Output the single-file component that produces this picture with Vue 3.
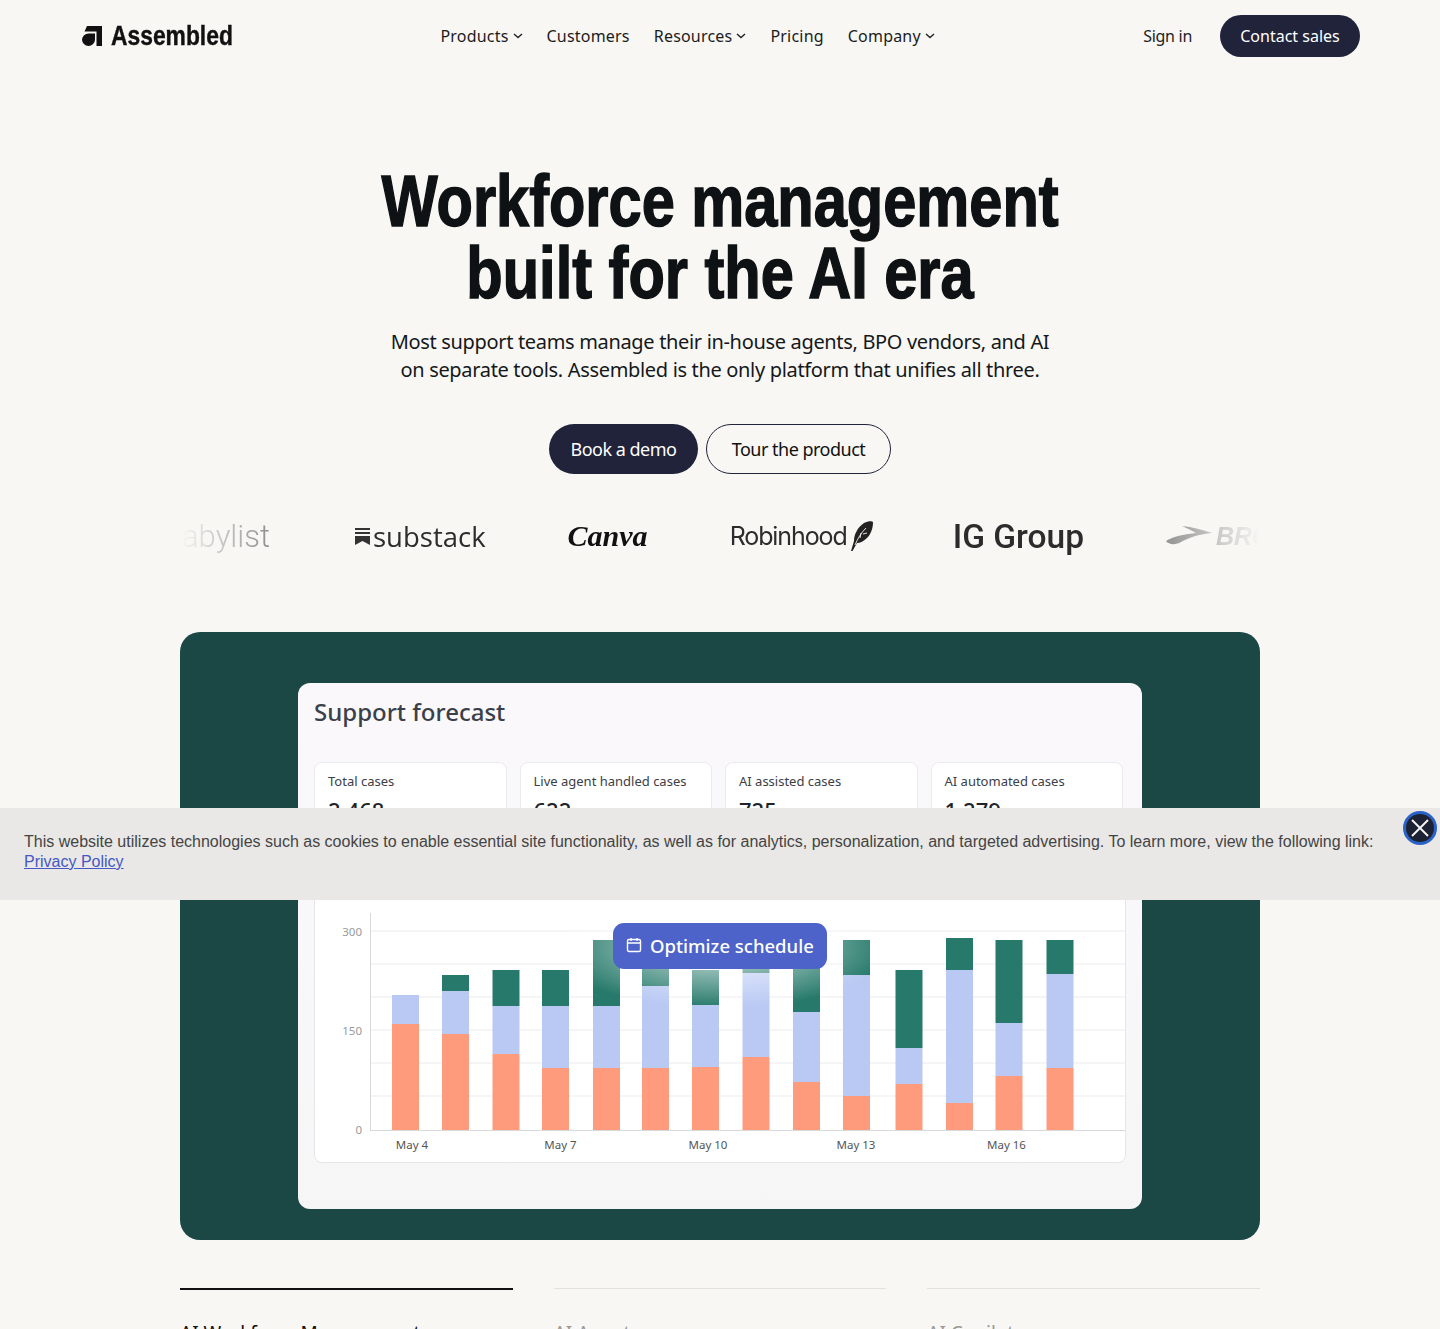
<script setup>
const navItems = [
  { label: 'Products', caret: true },
  { label: 'Customers', caret: false },
  { label: 'Resources', caret: true },
  { label: 'Pricing', caret: false },
  { label: 'Company', caret: true }
]

const stats = [
  { label: 'Total cases', value: '2,468' },
  { label: 'Live agent handled cases', value: '622' },
  { label: 'AI assisted cases', value: '725' },
  { label: 'AI automated cases', value: '1,279' }
]

// x, green top, blue top, orange top (page px, baseline is 1130)
const bars = [
  [392, 995, 995, 1024],
  [442, 975, 991, 1034],
  [492.5, 970, 1006, 1054],
  [542, 970, 1006, 1068],
  [593, 940, 1006, 1068],
  [642, 940, 986, 1068],
  [692, 970, 1005, 1067],
  [742.5, 940, 973, 1057],
  [793, 930, 1012, 1082],
  [843, 940, 975, 1096],
  [895.5, 970, 1048, 1084],
  [946, 938, 970, 1103],
  [995.5, 940, 1023, 1076],
  [1046.5, 940, 974, 1068]
]

const gridLines = [931, 964, 997, 1030, 1063, 1096]
const yLabels = [
  { y: 936, text: '300' },
  { y: 1035, text: '150' },
  { y: 1134, text: '0' }
]
const xLabels = [
  { x: 412, text: 'May 4' },
  { x: 560.5, text: 'May 7' },
  { x: 708, text: 'May 10' },
  { x: 856, text: 'May 13' },
  { x: 1006.5, text: 'May 16' }
]

const tabs = ['AI Workforce Management', 'AI Agents', 'AI Copilot']
</script>

<template>
  <div class="page">
    <header class="topbar">
      <a class="brand">
        <svg class="brand-mark" viewBox="0 0 20 20" width="20" height="20">
          <path d="M5 0H20V20H14.5V5.5H2.5Z" fill="#111" />
          <path d="M0 13.5a6.5 6.5 0 0 0 13 0V7.5H6.5A6.5 6.5 0 0 0 0 13.5Z" fill="#111" />
        </svg>
        <span class="brand-name">Assembled</span>
      </a>
      <nav class="nav">
        <a v-for="item in navItems" :key="item.label" class="nav-link">
          {{ item.label }}
          <svg v-if="item.caret" viewBox="0 0 10 6" width="10" height="6">
            <path d="M1 1l4 3.6L9 1" fill="none" stroke="#222" stroke-width="1.4" />
          </svg>
        </a>
      </nav>
      <div class="topbar-right">
        <a class="signin">Sign in</a>
        <a class="contact">Contact sales</a>
      </div>
    </header>

    <section class="hero">
      <h1>Workforce management<br />built for the AI era</h1>
      <p>Most support teams manage their in-house agents, BPO vendors, and AI<br />on separate tools. Assembled is the only platform that unifies all three.</p>
      <div class="cta">
        <a class="btn btn-dark">Book a demo</a>
        <a class="btn btn-line">Tour the product</a>
      </div>
    </section>

    <div class="logos">
      <div class="logo-track">
        <span class="logo logo-babylist">Babylist</span>
        <span class="logo logo-substack">
          <svg viewBox="0 0 15 17" width="15" height="17">
            <path d="M0 0h15v2H0zM0 4h15v2H0zM0 8h15v9l-7.5-4L0 17z" fill="#333" />
          </svg>
          substack
        </span>
        <span class="logo logo-canva">Canva</span>
        <span class="logo logo-robinhood">
          Robinhood
          <svg viewBox="0 0 22 30" width="22" height="30">
            <path d="M0 30L3 20C3 13 7 6 13 2 17 0 21 0 22 1 22 7 20 13 16 17 13 20 9 22 6 22L1.500 30Z" fill="#222" />
            <path d="M4 24C7 17 10 12 15 7M9 17l1 -5M12 13l4 -1" fill="none" stroke="#f8f7f4" stroke-width="0.9" />
          </svg>
        </span>
        <span class="logo logo-ig">IG Group</span>
        <span class="logo logo-brooks">
          <svg viewBox="0 0 46 20" width="46" height="20">
            <path d="M0 15C8 10 20 8 30 7 26 5 21 2 16 0c10 1 21 4 30 7-12 1-22 4-31 9-5 3-12 3-15-1Z" fill="#8d8d8b" />
          </svg>
          <b>BROOKS</b>
        </span>
      </div>
    </div>

    <section class="showcase">
      <div class="panel">
        <h2>Support forecast</h2>
        <div class="stats">
          <div v-for="stat in stats" :key="stat.label" class="stat">
            <div class="stat-label">{{ stat.label }}</div>
            <div class="stat-value">{{ stat.value }}</div>
          </div>
        </div>
        <div class="chart-card">
          <svg class="chart" viewBox="315 869 810 293" width="810" height="293">
            <defs>
              <radialGradient id="glow">
                <stop offset="0" stop-color="#fff" stop-opacity="0.8" />
                <stop offset="1" stop-color="#fff" stop-opacity="0" />
              </radialGradient>
            </defs>
            <line v-for="y in gridLines" :key="y" x1="370" x2="1126" :y1="y" :y2="y" stroke="#ebebeb" />
            <line x1="370.5" x2="370.5" y1="913" y2="1130" stroke="#d9d9d9" />
            <line x1="370" x2="1126" y1="1130.5" y2="1130.5" stroke="#d9d9d9" />
            <g v-for="bar in bars" :key="bar[0]">
              <rect :x="bar[0]" :y="bar[1]" width="27" :height="bar[2] - bar[1]" fill="#277a6b" />
              <rect :x="bar[0]" :y="bar[2]" width="27" :height="bar[3] - bar[2]" fill="#b9c9f4" />
              <rect :x="bar[0]" :y="bar[3]" width="27" :height="1130 - bar[3]" fill="#fd9b7c" />
            </g>
            <ellipse cx="720" cy="946" rx="170" ry="62" fill="url(#glow)" />
            <text v-for="l in yLabels" :key="l.text" x="362" :y="l.y" text-anchor="end" class="tick-y">{{ l.text }}</text>
            <text v-for="l in xLabels" :key="l.text" :x="l.x" y="1149" text-anchor="middle" class="tick-x">{{ l.text }}</text>
          </svg>
          <div class="optimize">
            <svg viewBox="0 0 16 16" width="16" height="16">
              <rect x="1.5" y="2.500" width="13" height="12" rx="1.5" fill="none" stroke="#fff" stroke-width="1.4" />
              <path d="M1.5 6h13M5 1v3M11 1v3" stroke="#fff" stroke-width="1.4" />
            </svg>
            Optimize schedule
          </div>
        </div>
      </div>
    </section>

    <div class="tabs">
      <div v-for="(tab, i) in tabs" :key="tab" class="tab" :class="{ active: i === 0 }">{{ tab }}</div>
    </div>

    <div class="cookie">
      <p>This website utilizes technologies such as cookies to enable essential site functionality, as well as for analytics, personalization, and targeted advertising. To learn more, view the following link: <a>Privacy Policy</a></p>
      <button class="cookie-close" aria-label="Close">
        <svg viewBox="0 0 20 20" width="20" height="20">
          <path d="M2 2l16 16M18 2L2 18" stroke="#f4f4f4" stroke-width="2" />
        </svg>
      </button>
    </div>
  </div>
</template>

<style>
body {
  background: #f8f7f4;
}
</style>

<style scoped>
* {
  box-sizing: border-box;
}

.page {
  position: relative;
  height: 1329px;
  overflow: hidden;
  background: #f8f7f4;
  color: #111;
  font-family: 'Noto Sans', sans-serif;
}

.topbar {
  display: flex;
  align-items: center;
  justify-content: space-between;
  height: 72px;
  padding: 0 80px 0 82px;
}

.brand {
  display: flex;
  align-items: center;
  gap: 9px;
}

.brand-name {
  display: block;
  width: 121px;
  font-family: 'Liberation Sans', sans-serif;
  font-size: 27px;
  font-weight: 700;
  color: #111;
  white-space: nowrap;
  transform: scaleX(0.846);
  transform-origin: left center;
  -webkit-text-stroke: 0.4px #111;
}

.nav {
  display: flex;
  gap: 24px;
}

.nav-link {
  display: flex;
  align-items: center;
  gap: 4px;
  font-size: 16px;
  letter-spacing: 0.2px;
  color: #1c1c1c;
}

.topbar-right {
  display: flex;
  align-items: center;
  gap: 28px;
}

.signin {
  font-size: 16px;
  letter-spacing: -0.3px;
  color: #222;
}

.contact {
  display: flex;
  align-items: center;
  justify-content: center;
  width: 140px;
  height: 42px;
  border-radius: 21px;
  background: #20233a;
  color: #fff;
  font-size: 16px;
}

.hero {
  text-align: center;
  padding-top: 93px;
}

.hero h1 {
  margin: 0;
  font-family: 'Liberation Sans', sans-serif;
  font-size: 72px;
  line-height: 72px;
  font-weight: 700;
  color: #0e1214;
  transform: scaleX(0.827);
  -webkit-text-stroke: 1.5px #0e1214;
}

.hero p {
  margin: 19px 0 0;
  font-size: 20px;
  line-height: 28px;
  letter-spacing: -0.33px;
  color: #15181a;
}

.cta {
  display: flex;
  justify-content: center;
  gap: 8px;
  margin-top: 40px;
}

.btn {
  display: flex;
  align-items: center;
  justify-content: center;
  height: 50px;
  padding-bottom: 1px;
  border-radius: 25px;
  font-size: 18px;
  letter-spacing: -0.5px;
}

.btn-dark {
  width: 149px;
  background: #20233a;
  color: #fff;
}

.btn-line {
  width: 185px;
  border: 1px solid #20233a;
  color: #111;
}

.logos {
  width: 1080px;
  height: 60px;
  margin: 32px auto 0;
  overflow: hidden;
  -webkit-mask-image: linear-gradient(to right, transparent 0, #000 110px, #000 980px, transparent 1080px);
  mask-image: linear-gradient(to right, transparent 0, #000 110px, #000 980px, transparent 1080px);
}

.logo-track {
  display: flex;
  align-items: center;
  gap: 82px;
  height: 60px;
  margin-left: -30px;
  white-space: nowrap;
}

.logo {
  display: flex;
  align-items: center;
  flex: none;
  color: #2c2c2c;
}

.logo-babylist {
  width: 123px;
  padding-right: 3px;
  justify-content: flex-end;
  font-family: 'Roboto', sans-serif;
  font-size: 31px;
  font-weight: 300;
  color: #777;
}

.logo-substack {
  gap: 3px;
  font-family: 'Open Sans', sans-serif;
  font-size: 27.5px;
}

.logo-canva {
  font-family: 'Liberation Serif', serif;
  font-style: italic;
  font-weight: 700;
  font-size: 30px;
  color: #111;
}

.logo-robinhood {
  gap: 4px;
  margin-right: -2px;
  font-family: 'Inter', sans-serif;
  font-size: 25px;
  letter-spacing: -1.1px;
}

.logo-ig {
  font-family: 'Roboto', sans-serif;
  font-weight: 500;
  font-size: 33.5px;
}

.logo-brooks {
  gap: 4px;
  font-family: 'Liberation Sans', sans-serif;
  font-style: italic;
  font-size: 25px;
  color: #888;
}

.showcase {
  width: 1080px;
  height: 608px;
  margin: 66px auto 0;
  padding: 51px 118px 31px;
  border-radius: 20px;
  background: #1b4745;
}

.panel {
  height: 526px;
  padding: 12px 16px 0;
  border-radius: 12px;
  background: linear-gradient(#faf8fb, #f6f6f7);
}

.panel h2 {
  margin: 0;
  height: 34px;
  font-size: 24px;
  line-height: 34px;
  font-weight: 500;
  color: #3a4049;
}

.stats {
  display: flex;
  gap: 13px;
  margin-top: 33px;
  padding-right: 3px;
}

.stat {
  flex: 1;
  height: 96px;
  padding: 8px 13px;
  border: 1px solid #ebebee;
  border-radius: 8px;
  background: #fff;
}

.stat-label {
  font-size: 13px;
  line-height: 20px;
  color: #3c4047;
}

.stat-value {
  margin-top: 4px;
  font-size: 22px;
  line-height: 30px;
  font-weight: 500;
  color: #20242a;
}

.chart-card {
  position: relative;
  height: 295px;
  margin-top: 10px;
  border: 1px solid #e6e6e8;
  border-radius: 8px;
  background: #fff;
}

.chart {
  display: block;
}

.tick-y {
  font-size: 11.5px;
  fill: #9a9a9a;
}

.tick-x {
  font-size: 11.5px;
  fill: #555;
}

.optimize {
  position: absolute;
  left: 298px;
  top: 54px;
  display: flex;
  align-items: center;
  gap: 8px;
  width: 214px;
  height: 46px;
  padding: 0 0 2px 13px;
  border-radius: 11px;
  background: #4d63c9;
  color: #fff;
  font-size: 18.500px;
  font-weight: 500;
}

.tabs {
  display: flex;
  gap: 41px;
  width: 1080px;
  margin: 48px auto 0;
}

.tab {
  flex: 1;
  padding-top: 31px;
  border-top: 1px solid #e2e1de;
  font-size: 19px;
  color: #999;
}

.tab.active {
  border-top: 2px solid #111;
  padding-top: 30px;
  color: #111;
}

.cookie {
  position: absolute;
  left: 0;
  top: 808px;
  width: 100%;
  height: 92px;
  padding: 24px 64px 0 24px;
  background: #e9e8e6;
  font-family: 'Liberation Sans', Arial, sans-serif;
  font-size: 16px;
  line-height: 20px;
  color: #444;
}

.cookie p {
  margin: 0;
}

.cookie a {
  color: #4558c4;
  text-decoration: underline;
}

.cookie-close {
  position: absolute;
  left: 1403px;
  top: 3px;
  display: flex;
  align-items: center;
  justify-content: center;
  width: 34px;
  height: 34px;
  padding: 0;
  border: 3px solid #2a62c8;
  border-radius: 50%;
  background: #1c2233;
}
</style>
